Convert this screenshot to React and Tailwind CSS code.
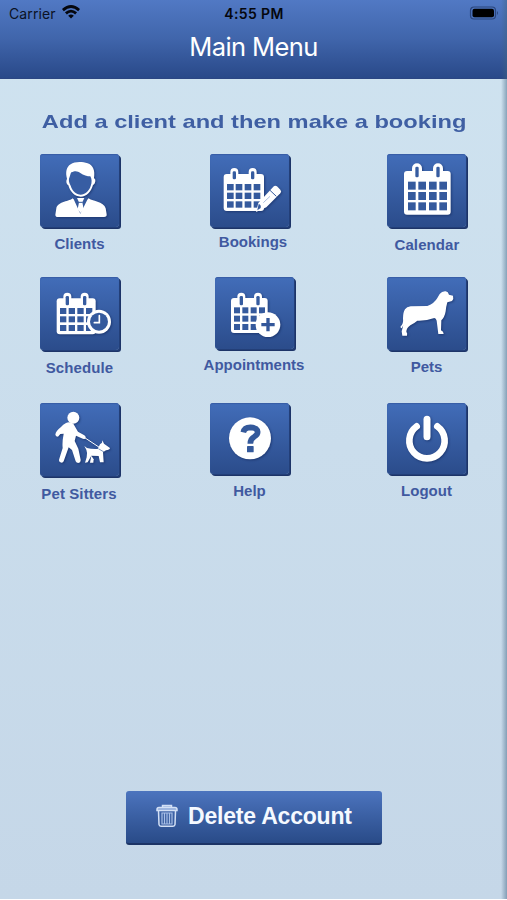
// Main menu screen of the pet sitting app.
// Shows the status bar, the title bar, a grid of shortcuts and the delete account button.

const menuRows = [
  {
    id: 'row-1',
    className: 'h-[123px]',
    items: [
      { label: 'Clients', icon: ClientIcon, tile: 'ml-[15px] h-[73px]', text: 'mt-[7px] pr-[1px]' },
      { label: 'Bookings', icon: BookingIcon, tile: 'ml-[11px] h-[73px]', text: 'mt-[5px] pr-[2px]' },
      { label: 'Calendar', icon: CalendarIcon, tile: 'ml-[14px] h-[73px]', text: 'mt-[8px] pr-[2px] tracking-[0.1px]' },
    ],
  },
  {
    id: 'row-2',
    className: 'h-[126px]',
    items: [
      { label: 'Schedule', icon: ScheduleIcon, tile: 'ml-[15px] h-[73px]', text: 'mt-[8px] pr-[1px] tracking-[0.1px]' },
      { label: 'Appointments', icon: AppointmentIcon, tile: 'ml-[16px] h-[72px]', text: 'mt-[6px]' },
      { label: 'Pets', icon: PetIcon, tile: 'ml-[14px] h-[73px]', text: 'mt-[7px] pr-[3px]' },
    ],
  },
  {
    id: 'row-3',
    className: 'h-[126px]',
    items: [
      { label: 'Pet Sitters', icon: SitterIcon, tile: 'ml-[15px] h-[73px]', text: 'mt-[8px] pr-[2px] tracking-[0.1px]' },
      { label: 'Help', icon: HelpIcon, tile: 'ml-[11px] h-[71px]', text: 'mt-[7px] pr-[9px]' },
      { label: 'Logout', icon: LogoutIcon, tile: 'ml-[14px] h-[71px]', text: 'mt-[7px] pr-[3px]' },
    ],
  },
];

// Every tile drawing uses the same 240 x 225 canvas
function TileSvg({ children, origin }) {
  return (
    <svg viewBox={`${origin} 240 225`} className="w-[80px] h-[75px] shrink-0 drop-shadow-[1px_1px_1px_rgba(15,35,85,0.55)]" fill="white">
      {children}
    </svg>
  );
}

// Calendar sheet with two rings, columns and rows are lists of cell positions
function Sheet({ x, y, w, h, head, rings, ringTop, ringW = 24, ringH = 42, cols, rows, cell }) {
  return (
    <>
      <rect x={x} y={y} width={w} height={h} rx="9" />
      {rings.map((cx) => (
        <g key={cx}>
          <rect x={cx - ringW / 2} y={ringTop} width={ringW} height={ringH} rx={ringW / 2} />
          <rect x={cx - 5} y={ringTop + 10} width="10" height={head} rx="4" fill="#365ca0" />
        </g>
      ))}
      {rows.map((cy) =>
        cols.map((cx) => <rect key={`${cx}-${cy}`} x={cx} y={cy} width={cell[0]} height={cell[1]} fill="#355a9d" />)
      )}
    </>
  );
}

function ClientIcon() {
  return (
    <TileSvg origin="30 27">
      <path d="M111 101C106 83 109 65 122 58C133 49 157 49 173 55C189 60 196 77 192 99L196 104C197 113 192 119 189 120C184 139 170 155 152 155C134 155 120 140 115 121C109 117 107 109 111 101Z" />
      <path fill="#375da3" d="M119 95C121 91 121 86 124 82C136 76 143 78 151 84C160 91 172 94 181 94C186 102 186 113 182 123C177 139 165 149 152 149C139 149 127 138 122 122C116 112 115 103 119 95Z" />
      <path d="M128 160C121 169 83 169 79 190L76 209Q76 216 84 216H222Q231 216 230 208L227 190C222 170 184 168 176 160L152 178Z" />
      <path fill="#34599c" d="M129 158L151 206L175 158L168 155L161 158H143L136 155Z" />
      <path d="M141 159H163L157 172L161 193L152 204L143 193L147 172Z" />
      <path d="M146 172H158" stroke="#34599c" strokeWidth="3" />
    </TileSvg>
  );
}

function BookingIcon() {
  return (
    <TileSvg origin="30 27">
      <Sheet x={71} y={87} w={121} h={111} head={24} rings={[103, 158]} ringTop={69} cols={[81, 107, 134, 161]} rows={[117, 143, 169]} cell={[20, 19]} />
      <path d="M168 201L175 174L220 125Q225 120 231 124L241 134Q246 140 241 145L199 187Z" />
      <path fill="#355a9d" d="M172 196L176 177Q184 179 182 189Z" />
      <path stroke="#355a9d" strokeWidth="3" fill="none" d="M210 136L229 154" />
      <path stroke="#7f9bcd" strokeWidth="2" fill="none" d="M190 173L210 154" />
    </TileSvg>
  );
}

function CalendarIcon() {
  return (
    <TileSvg origin="30 27">
      <Sheet x={81} y={78} w={140} h={131} head={32} rings={[120, 183]} ringTop={55} ringW={30} cols={[93, 124, 156, 187]} rows={[110, 141, 172]} cell={[23, 24]} />
    </TileSvg>
  );
}

function ScheduleIcon() {
  return (
    <TileSvg origin="30 21">
      <Sheet x={80} y={85} w={117} h={108} head={28} rings={[112, 164]} ringTop={68} cols={[90, 116, 142, 168]} rows={[114, 139, 165]} cell={[19, 18]} />
      <circle cx="207" cy="155" r="36" />
      <circle cx="207" cy="155" r="27" fill="#355a9d" />
      <path d="M208 137V158H193" fill="none" stroke="white" strokeWidth="5" strokeLinecap="round" />
    </TileSvg>
  );
}

function AppointmentIcon() {
  return (
    <TileSvg origin="45 21">
      <Sheet x={93} y={84} w={110} h={105} head={28} rings={[124, 174]} ringTop={68} cols={[102, 127, 152, 177]} rows={[112, 137, 162]} cell={[18, 18]} />
      <circle cx="204" cy="164" r="37" />
      <path d="M204 144V184M184 164H224" stroke="#33579a" strokeWidth="10" />
    </TileSvg>
  );
}

function PetIcon() {
  return (
    <TileSvg origin="30 21">
      <path d="M188 72Q195 63 206 64Q214 65 216 74L228 77Q231 87 225 93L211 97Q207 111 206 124Q203 142 193 151L192 181Q200 184 200 192H184L179 152Q177 145 172 144Q148 153 121 152Q114 158 100 166Q88 175 88 185Q92 190 90 197H76L74 184L79 166L74 175Q69 173 71 169Q80 162 78 145Q78 127 84 118Q89 110 101 109L151 108Q173 99 181 84Z" />
    </TileSvg>
  );
}

function SitterIcon() {
  return (
    <TileSvg origin="30 24">
      <circle cx="130" cy="68" r="18" />
      <path d="M108 84Q118 79 130 86L144 110L163 121Q170 126 165 131Q162 134 155 130L138 122L134 138L145 161L152 194Q153 203 145 204Q139 204 137 199L126 165L116 157L101 199Q98 205 91 202Q85 199 88 191L98 159Q96 142 101 116L91 117L84 125Q77 125 76 119Q77 108 93 96Q99 88 108 84Z" />
      <path d="M164 128L211 159" fill="none" stroke="white" strokeWidth="3" />
      <path d="M163 153L171 159Q185 163 203 162L210 148L216 143L217 136L222 146L240 159Q239 165 228 166L219 172L221 202H210L206 183L184 182L173 202L165 203L170 187Q173 173 169 164Z" />
      <path d="M184 182L191 193L190 203H180Z" />
      <path d="M205 161L222 171" stroke="#34599b" strokeWidth="2" />
    </TileSvg>
  );
}

function HelpIcon() {
  return (
    <TileSvg origin="30 24">
      <circle cx="150" cy="130" r="63" />
      <path d="M130 112Q133 97 151 97Q172 98 173 111Q173 119 163 125Q151 131 151 146" fill="none" stroke="#34599b" strokeWidth="17" />
      <rect x="141" y="153" width="20" height="19" rx="2" fill="#34599b" />
    </TileSvg>
  );
}

function LogoutIcon() {
  return (
    <TileSvg origin="30 24">
      <path d="M119 94A53 53 0 1 0 181 94" fill="none" stroke="white" strokeWidth="20" strokeLinecap="round" />
      <path d="M150 73V125" fill="none" stroke="white" strokeWidth="21" strokeLinecap="round" />
    </TileSvg>
  );
}

const MenuItem = ({ item }) => {
  const Icon = item.icon;
  return (
    <div className="w-[110px] flex flex-col items-start">
      {/* Tile */}
      <button
        className={`flex w-[79px] shrink-0 items-start overflow-hidden rounded-[3px] bg-linear-to-b from-[#426db9] to-[#2b4c8b] shadow-[1px_1px_0_#233f78,2px_2px_0_#1d3468,inset_0_1px_1px_#385da6] ${item.tile}`}
      >
        <Icon />
      </button>
      <span className={`w-full whitespace-nowrap text-center text-[15px] leading-5 font-bold text-[#4059a0] ${item.text}`}>
        {item.label}
      </span>
    </div>
  );
};

const StatusBar = () => (
  <div className="flex h-[26px] items-center justify-between pl-[9px] pr-[8px] font-['Inter',sans-serif] text-[14px] text-[#0b1224]">
    <div className="flex w-[200px] items-center gap-[6px]">
      <span className="tracking-[0.1px]">Carrier</span>
      <svg viewBox="0 0 18 14" className="h-[14px] w-[18px] -mt-[2px]" fill="none" stroke="#05070d" strokeWidth="2.8">
        <path d="M0.9 5.1Q9 -2.1 17.1 5.1" />
        <path d="M3.9 8.4Q9 3.8 14.1 8.4" />
        <path d="M6.2 10.7Q9 8.4 11.8 10.7L9 13.6Z" fill="#05070d" stroke="none" />
      </svg>
    </div>
    <span className="font-semibold tracking-[0.4px] text-[#05070d]">4:55 PM</span>
    <div className="flex w-[200px] items-center justify-end">
      <svg viewBox="0 0 30 14" className="h-[14px] w-[30px]">
        <rect x="1.5" y="1" width="25" height="12" rx="3.5" fill="none" stroke="#2b467d" strokeWidth="1.2" />
        <rect x="3.5" y="2.7" width="21.5" height="8.6" rx="2" fill="#000" />
        <path d="M28 5Q30 7 28 9Z" fill="#2b467d" />
      </svg>
    </div>
  </div>
);

const App = () => {
  return (
    <div className="relative h-[900px] w-[507px] overflow-hidden bg-white font-['Liberation_Sans',Arial,sans-serif]">
      <div className="flex h-[899px] flex-col bg-linear-to-b from-[#cfe3f0] to-[#c5d7e8]">
        {/* Header */}
        <header className="h-[79px] shrink-0 border-b border-[#2b4683] bg-linear-to-b from-[#5179c4] via-[#4065ab] to-[#294989]">
          <StatusBar />
          <h1 className="mt-[2px] text-center font-['Inter',sans-serif] text-[25.5px] leading-[38px] font-normal tracking-[-0.6px] text-white">Main Menu</h1>
        </header>

        <main className="flex flex-1 flex-col">
          <h2 className="mt-[31px] h-6 origin-center scale-x-[1.245] whitespace-nowrap pl-px text-center text-[19px] leading-6 font-bold text-[#3f5fa3]">
            Add a client and then make a booking
          </h2>

          <div className="mt-[20px] flex flex-col">
            {menuRows.map((row) => (
              <div key={row.id} className={`flex gap-[64px] pl-[25px] ${row.className}`}>
                {row.items.map((item) => (
                  <MenuItem key={item.label} item={item} />
                ))}
              </div>
            ))}
          </div>

          <button className="mt-auto mb-[54px] ml-[126px] flex h-[54px] w-[256px] items-center rounded-[3px] border-b-2 border-[#1c3466] bg-linear-to-b from-[#4c74be] to-[#294b88] pl-[30px] pb-[2px]">
            <svg viewBox="0 0 22 24" className="h-6 w-[22px]" fill="none" stroke="#d3e0f5" strokeWidth="1.5">
              <path d="M1 5.5Q1 3.5 3 3.5H19Q21 3.5 21 5.5V6.5H1ZM6.5 3.5V1.5H15.5V3.5" fill="#8ca8d8" />
              <path d="M2.5 7L3 20.5Q3.2 22.3 5 22.3H17Q18.8 22.3 19 20.5L19.5 7" />
              <path d="M6 9V20H16V9ZM8.5 9V20M11 9V20M13.5 9V20" stroke="#a9c0e8" strokeWidth="1.2" />
            </svg>
            <span className="ml-[10px] whitespace-nowrap text-[23px] leading-7 font-bold tracking-[-0.2px] text-[#f5f9ff]">Delete Account</span>
          </button>
        </main>
      </div>

      {/* Shade along the right edge */}
      <div className="pointer-events-none absolute right-0 top-0 h-[899px] w-[6px] bg-linear-to-r from-transparent to-[#416482]/50" />
    </div>
  );
};

export default App;
